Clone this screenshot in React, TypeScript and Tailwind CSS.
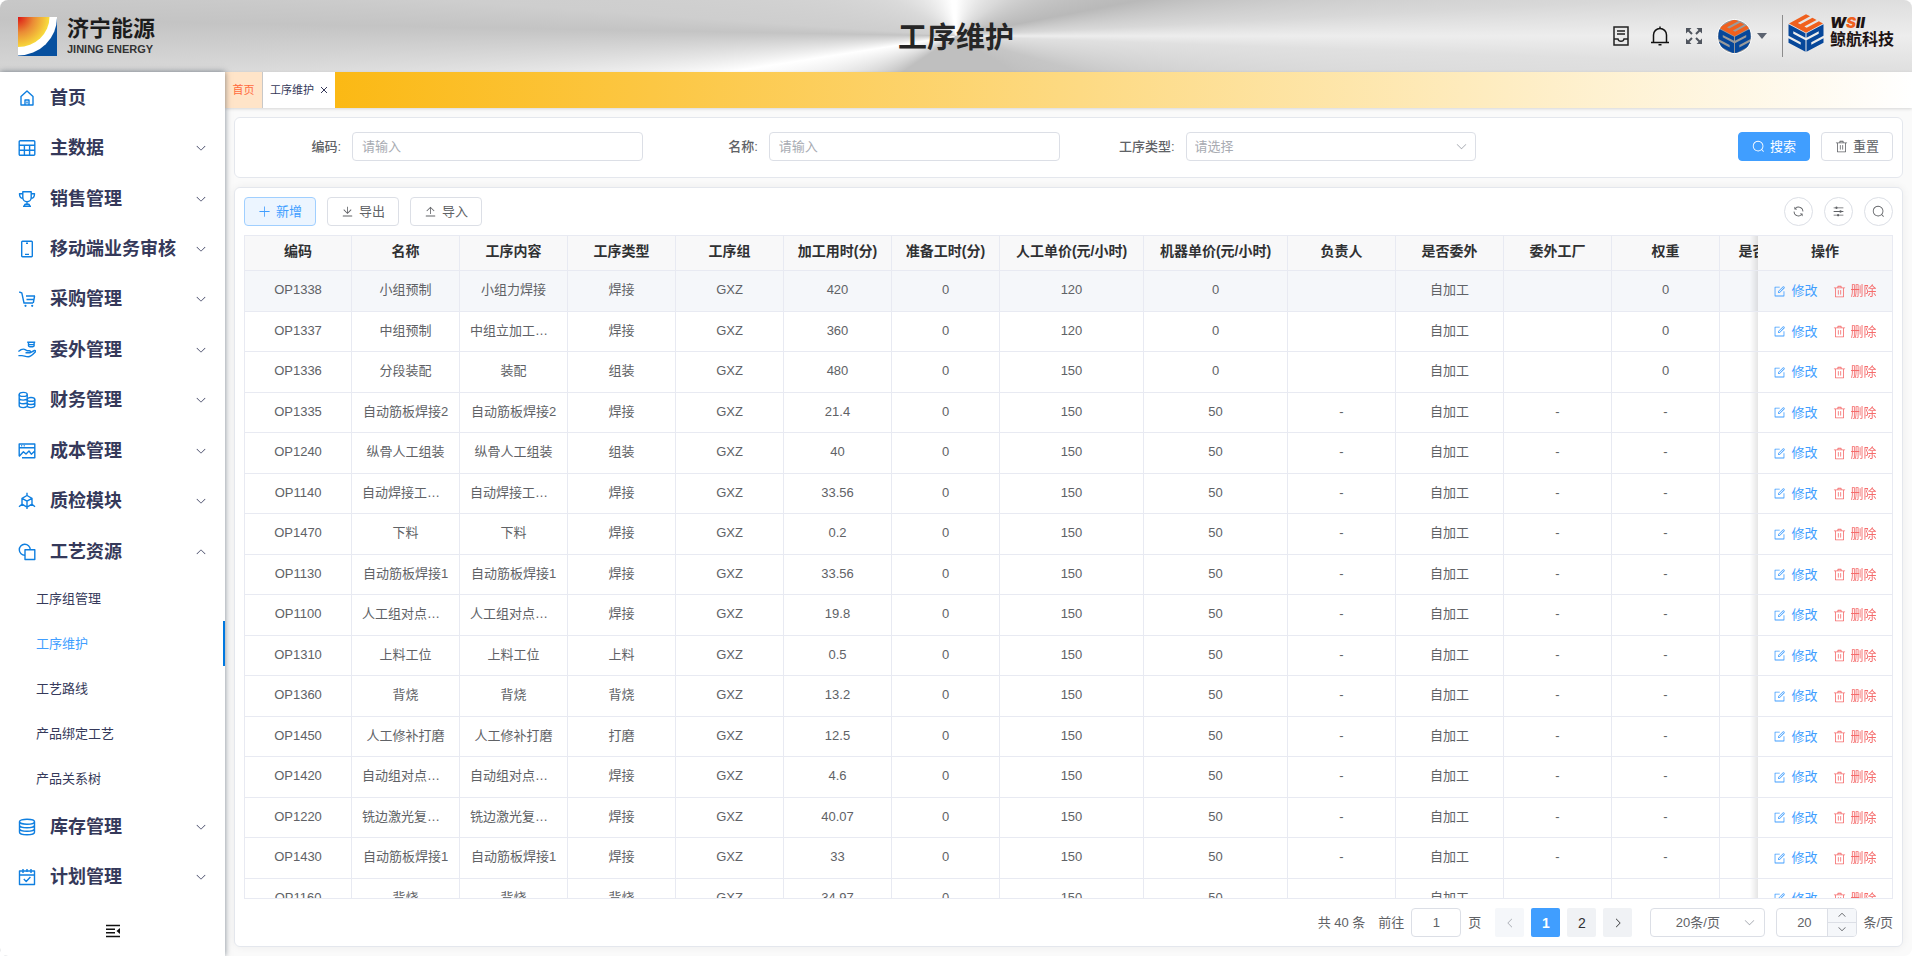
import { Fragment, useState } from 'react'
import type { ReactNode } from 'react'
import clsx from 'clsx'

const glyphs = {
  search:
    'm795.904 750.72 124.992 124.928a32 32 0 0 1-45.248 45.248L750.656 795.904a416 416 0 1 1 45.248-45.248zM480 832a352 352 0 1 0 0-704 352 352 0 0 0 0 704',
  trash:
    'M160 256H96a32 32 0 0 1 0-64h256V95.936a32 32 0 0 1 32-32h256a32 32 0 0 1 32 32V192h256a32 32 0 1 1 0 64h-64v672a32 32 0 0 1-32 32H192a32 32 0 0 1-32-32zm448-64v-64H416v64zM224 896h576V256H224zm192-128a32 32 0 0 1-32-32V416a32 32 0 0 1 64 0v320a32 32 0 0 1-32 32m192 0a32 32 0 0 1-32-32V416a32 32 0 0 1 64 0v320a32 32 0 0 1-32 32',
  edit:
    'M832 512a32 32 0 1 1 64 0v352a32 32 0 0 1-32 32H160a32 32 0 0 1-32-32V160a32 32 0 0 1 32-32h352a32 32 0 0 1 0 64H192v640h640zM469.952 554.24l52.8-7.552L847.104 222.4a32 32 0 1 0-45.248-45.248L477.44 501.44l-7.552 52.8zm422.4-422.4a96 96 0 0 1 0 135.808l-331.84 331.84a32 32 0 0 1-18.112 9.088L436.8 623.68a32 32 0 0 1-36.224-36.224l15.104-105.6a32 32 0 0 1 9.024-18.112l331.904-331.84a96 96 0 0 1 135.744 0z',
  plus:
    'M480 480V128a32 32 0 0 1 64 0v352h352a32 32 0 1 1 0 64H544v352a32 32 0 1 1-64 0V544H128a32 32 0 0 1 0-64z',
  download:
    'M160 832h704a32 32 0 1 1 0 64H160a32 32 0 1 1 0-64m384-253.696 236.288-236.352 45.248 45.248L508.8 704 192 387.2l45.248-45.248L480 584.704V128h64z',
  upload:
    'M160 832h704a32 32 0 1 1 0 64H160a32 32 0 1 1 0-64m384-578.304V704h-64V247.296L237.248 490.048 192 444.8 508.8 128l316.8 316.8-45.312 45.248z',
  down:
    'M831.872 340.864 512 652.672 192.128 340.864a30.592 30.592 0 0 0-42.752 0 29.12 29.12 0 0 0 0 41.6L489.664 714.24a32 32 0 0 0 44.672 0l340.288-331.712a29.12 29.12 0 0 0 0-41.728 30.592 30.592 0 0 0-42.752 0z',
  refresh:
    'M771.776 794.88A384 384 0 0 1 128 512h64a320 320 0 0 0 555.712 216.448H654.72a32 32 0 1 1 0-64h149.056a32 32 0 0 1 32 32v148.928a32 32 0 1 1-64 0v-50.56zM276.288 295.616h92.992a32 32 0 0 1 0 64H220.16a32 32 0 0 1-32-32V178.56a32 32 0 0 1 64 0v50.56A384 384 0 0 1 896.128 512h-64a320 320 0 0 0-555.776-216.384z',
  operation:
    'M389.44 768a96.064 96.064 0 0 1 181.12 0H896v64H570.56a96.064 96.064 0 0 1-181.12 0H128v-64zm192-288a96.064 96.064 0 0 1 181.12 0H896v64H762.56a96.064 96.064 0 0 1-181.12 0H128v-64zm-320-288a96.064 96.064 0 0 1 181.12 0H896v64H442.56a96.064 96.064 0 0 1-181.12 0H128v-64z',
}

function Glyph({ name, className = 'size-[13px]' }: { name: keyof typeof glyphs; className?: string }) {
  return (
    <svg viewBox="0 0 1024 1024" fill="currentColor" className={clsx('shrink-0', className)} aria-hidden="true">
      <path d={glyphs[name]} />
    </svg>
  )
}

function MenuIcon({ children }: { children: ReactNode }) {
  return (
    <svg
      viewBox="0 0 18 18"
      fill="none"
      stroke="currentColor"
      strokeWidth="1.4"
      strokeLinejoin="round"
      className="size-[18px] shrink-0 text-[#0f7fe0]"
      aria-hidden="true"
    >
      {children}
    </svg>
  )
}

interface MenuItem {
  label: string
  icon: ReactNode
  leaf?: boolean
  children?: string[]
}

const menu: MenuItem[] = [
  { label: '首页', leaf: true, icon: <path d="M3 16V7.6L9 2l6 5.600V16zM7 16v-5h4v5M9 12.500v2" /> },
  {
    label: '主数据',
    icon: <path d="M2.200 1.700h13.600a1 1 0 0 1 1 1v12.600a1 1 0 0 1-1 1H2.200a1 1 0 0 1-1-1V2.700a1 1 0 0 1 1-1zM1.200 6.200h15.600M1.200 11.200h15.600M6.400 6.200v10M11.600 6.200v10" />,
  },
  {
    label: '销售管理',
    icon: <path d="M4.800 1.700h8.400v5.800a4.200 4.200 0 0 1-8.400 0zM4.800 3.700H1.500c0 3 1 4.600 3.600 4.600M13.200 3.700h3.300c0 3-1 4.600-3.600 4.600M9 11.700v2.600M6 16.200l1-1.900h4l1 1.900zM5 16.400h8" />,
  },
  {
    label: '移动端业务审核',
    icon: <path d="M4.500 1.200h9a.8.8 0 0 1 .8.8v14a.8.8 0 0 1-.8.8h-9a.8.8 0 0 1-.8-.8V2a.8.8 0 0 1 .8-.8zM7 14.400h4M8 3.200h2" />,
  },
  {
    label: '采购管理',
    icon: (
      <>
        <path d="M1.200 2l2.600.8L6 13h9M8 6h9M16.600 6l-1.300 7M8.500 9.500h7" />
        <circle cx="7.500" cy="15.800" r="1.100" fill="currentColor" stroke="none" />
        <circle cx="14.200" cy="15.800" r="1.100" fill="currentColor" stroke="none" />
      </>
    ),
  },
  {
    label: '委外管理',
    icon: <path d="M9.200 1.300h8M10.500 1.500v3.200c0 1.400 5.600 1.400 5.600 0V1.500M10.500 3.600h5.600M.4 10.500l2.700-1.800c2-1 3.400-.6 4.500.2l1.400.8h2.500c1.300 0 1.300 2 0 2H7.500M11.800 11.800l4.600-2.300c1.300-.4 1.600.8.8 1.500-2.600 2.800-4.600 4.800-7 4.800-2.600 0-4.400-1.200-6.200-1.200H.4" />,
  },
  {
    label: '财务管理',
    icon: (
      <>
        <ellipse cx="5.200" cy="3.400" rx="4" ry="2" />
        <ellipse cx="13" cy="8.400" rx="3.800" ry="1.900" />
        <path d="M1.200 3.400v11.200c0 1 1.800 2 4 2 1.500 0 3-.4 3.600-1M9.200 3.400v4M1.200 7.100c0 1 1.800 2 4 2s3.200-.5 3.800-.9M1.200 10.800c0 1 1.800 2 4 2 1.800 0 3-.4 4-.9M9.200 8.400v6.200c0 1 1.700 2 3.800 2s3.800-1 3.800-2V8.400M9.200 11.500c0 1 1.700 2 3.800 2s3.800-1 3.800-2" />
      </>
    ),
  },
  {
    label: '成本管理',
    icon: <path d="M1.200 14V2h15.600v13.800H4M1.200 5.700h15.600M3.200 3.800h1M5.700 3.800h1M1 14.500l4.400-4.800L8 12l3-3 2.300 3.200 3.500-3.200" />,
  },
  {
    label: '质检模块',
    icon: <path d="M9 3.500l5 2.800v5.900l-5 2.900-5-2.900V6.300zM4 6.300l5 2.900 5-2.900M9 9.200v5.900M9 3.500V.8M4 12.200l-3 2.600M14 12.200l3 2.600M9 15.100v2" />,
  },
  {
    label: '工艺资源',
    icon: (
      <>
        <path d="M7 12.200A5.500 5.500 0 1 1 12.300 6.500" />
        <path d="M7 6.700h9.800v9.800H7z" />
      </>
    ),
    children: ['工序组管理', '工序维护', '工艺路线', '产品绑定工艺', '产品关系树'],
  },
  {
    label: '库存管理',
    icon: (
      <>
        <ellipse cx="9" cy="3.700" rx="7.500" ry="2.500" />
        <path d="M1.500 3.700v10.600c0 1.300 3.300 2.500 7.500 2.500s7.500-1.200 7.500-2.500V3.700M1.500 7.300c0 1.300 3.300 2.500 7.500 2.500s7.500-1.200 7.500-2.500M1.500 10.800c0 1.300 3.300 2.500 7.500 2.500s7.500-1.200 7.500-2.500" />
      </>
    ),
  },
  {
    label: '计划管理',
    icon: <path d="M1.500 3h15v13.500h-15zM1.500 7h15M5 1v4M9 1v3M13 1v4M5.800 11l2.400 2.400 4.200-4.400" />,
  },
]

const columns = [
  { title: '编码', width: 107 },
  { title: '名称', width: 108 },
  { title: '工序内容', width: 108 },
  { title: '工序类型', width: 108 },
  { title: '工序组', width: 108 },
  { title: '加工用时(分)', width: 108 },
  { title: '准备工时(分)', width: 108 },
  { title: '人工单价(元/小时)', width: 144 },
  { title: '机器单价(元/小时)', width: 144 },
  { title: '负责人', width: 108 },
  { title: '是否委外', width: 108 },
  { title: '委外工厂', width: 108 },
  { title: '权重', width: 108 },
  { title: '是否质检点', width: 108 },
]

// 编码, 名称, 工序内容, 工序类型, 加工用时, 人工单价, 机器单价, 负责人/委外工厂, 权重
const processes = [
  ['OP1338', '小组预制', '小组力焊接', '焊接', '420', '120', '0', '', '0'],
  ['OP1337', '中组预制', '中组立加工焊接', '焊接', '360', '120', '0', '', '0'],
  ['OP1336', '分段装配', '装配', '组装', '480', '150', '0', '', '0'],
  ['OP1335', '自动筋板焊接2', '自动筋板焊接2', '焊接', '21.4', '150', '50', '-', '-'],
  ['OP1240', '纵骨人工组装', '纵骨人工组装', '组装', '40', '150', '50', '-', '-'],
  ['OP1140', '自动焊接工位一', '自动焊接工位一', '焊接', '33.56', '150', '50', '-', '-'],
  ['OP1470', '下料', '下料', '焊接', '0.2', '150', '50', '-', '-'],
  ['OP1130', '自动筋板焊接1', '自动筋板焊接1', '焊接', '33.56', '150', '50', '-', '-'],
  ['OP1100', '人工组对点焊一', '人工组对点焊一', '焊接', '19.8', '150', '50', '-', '-'],
  ['OP1310', '上料工位', '上料工位', '上料', '0.5', '150', '50', '-', '-'],
  ['OP1360', '背烧', '背烧', '背烧', '13.2', '150', '50', '-', '-'],
  ['OP1450', '人工修补打磨', '人工修补打磨', '打磨', '12.5', '150', '50', '-', '-'],
  ['OP1420', '自动组对点焊一', '自动组对点焊一', '焊接', '4.6', '150', '50', '-', '-'],
  ['OP1220', '铣边激光复合焊', '铣边激光复合焊', '焊接', '40.07', '150', '50', '-', '-'],
  ['OP1430', '自动筋板焊接1', '自动筋板焊接1', '焊接', '33', '150', '50', '-', '-'],
  ['OP1160', '背烧', '背烧', '背烧', '34.97', '150', '50', '-', '-'],
]

function toCells([code, name, content, type, minutes, labor, machine, owner, weight]: string[]) {
  return [code, name, content, type, 'GXZ', minutes, '0', labor, machine, owner, '自加工', owner, weight, '']
}

function CubeMark({ className }: { className?: string }) {
  return (
    <svg viewBox="0 0 36 38" className={className} aria-hidden="true">
      <path d="M0 0H5V1.200H1.400V1.900H5V3.100H1.400V3.800H5V5H0Z" fill="#f0601e" transform="matrix(3.400 -1.850 3.400 1.850 1 9.400)" />
      <path d="M0 0H5V1.200H1.400V1.900H5V5H0V3.800H3.600V3.100H0Z" fill="#06479a" transform="matrix(3.400 1.800 0 3.700 .5 10.300)" />
      <path d="M0 0H5V3.100H1.400V3.800H5V5H0V1.900H3.600V1.200H0Z" fill="#06479a" transform="matrix(3.400 -1.800 0 3.700 18.500 19.300)" />
    </svg>
  )
}

function Header() {
  return (
    <header className="grid h-[72px] shrink-0 grid-cols-3 items-center bg-[conic-gradient(#fff_0deg,#d9d9d9_50deg,#b9b9b9_79deg,#d8d8d8_87deg,#ededed_90deg,#e0e0e0_92deg,#c6c6c6_106deg,#bfbfbf_122deg,#bfbfbf_236deg,#fff_261deg,#c4c4c4_271deg,#cecece_274deg,#dadada_300deg,#fff_353deg)] px-[18px]">
      <div className="flex items-center gap-[10px]">
        <svg viewBox="0 0 39 39" className="size-[39px]" role="img" aria-label="济宁能源">
          <defs>
            <radialGradient id="sun" gradientUnits="userSpaceOnUse" cx="0" cy="0" r="31">
              <stop offset="0" stopColor="#dc1414" />
              <stop offset=".5" stopColor="#ea8a35" />
              <stop offset="1" stopColor="#f8dc3c" />
            </radialGradient>
          </defs>
          <path d="M0 0H39V39H0z" fill="#07509f" />
          <path d="M0 0H39A39 38 0 0 1 0 38.500z" fill="#fff" />
          <path d="M0 0H31.500A31.500 30 0 0 1 0 30z" fill="url(#sun)" />
        </svg>
        <div className="flex flex-col text-[#1c1c1c]">
          <span className="text-[22px] leading-[26px] font-bold">济宁能源</span>
          <span className="text-[11px] leading-[14px] font-bold text-[#333]">JINING ENERGY</span>
        </div>
      </div>
      <h1 className="pt-1 text-center text-[29px] leading-9 font-bold text-[#262626]">工序维护</h1>
      <div className="flex items-center justify-end">
        <button type="button" aria-label="单据">
          <svg viewBox="0 0 20 22" fill="none" stroke="#222" strokeWidth="1.500" className="h-[22px] w-5">
            <path d="M3 2h14v18H3zM6 6h8M6 9h8M3 14h4c.5 3 5.500 3 6 0h4" />
          </svg>
        </button>
        <button type="button" aria-label="消息" className="ml-[18px]">
          <svg viewBox="0 0 22 22" fill="none" stroke="#111" strokeWidth="1.500" className="size-[22px]">
            <path d="M2 17.500h18M4.500 17.500V10a6.500 6.500 0 0 1 13 0v7.500M11 3.500V1.500M9.500 19.700h3" />
          </svg>
        </button>
        <button type="button" aria-label="全屏" className="ml-[14px]">
          <svg viewBox="0 0 18 18" className="size-[18px]" fill="#50555e" stroke="#50555e" strokeWidth="2">
            <path d="M1 1h5.500L1 6.500zM17 1v5.500L11.500 1zM1 17v-5.500L6.500 17zM17 17h-5.500l5.500-5.500z" stroke="none" />
            <path d="M3 3l4 4M15 3l-4 4M3 15l4-4M15 15l-4-4" />
          </svg>
        </button>
        <button type="button" aria-label="账户" className="ml-[14px] flex items-center gap-[5px]">
          <span className="flex size-[35px] items-center justify-center overflow-hidden rounded-full border border-white bg-[#9a9a9a]">
            <CubeMark className="size-[35px] shrink-0" />
          </span>
          <svg viewBox="0 0 10 6" className="h-[6px] w-[10px]" fill="#5c6370" aria-hidden="true">
            <path d="M0 0h10L5 6z" />
          </svg>
        </button>
        <div className="ml-[15px] h-[42px] w-px bg-[#8c8c8c]" />
        <div className="ml-[5px] flex items-center gap-[6px]">
          <CubeMark className="mb-[6px] h-[38px] w-9" />
          <div className="mb-[6px] flex flex-col whitespace-nowrap text-[#1d1414]">
            <span className="font-['Inter','Liberation_Sans',sans-serif] text-[15px] leading-[14px] font-black italic">
              W<span className="text-[#f0601e]">S</span>II
            </span>
            <span className="text-[16px] leading-5 font-bold">鲸航科技</span>
          </div>
        </div>
      </div>
    </header>
  )
}

function Sidebar() {
  const [active, setActive] = useState('工序维护')

  return (
    <aside className="z-10 flex w-[225px] shrink-0 flex-col bg-white shadow-[0_0_6px_rgba(0,21,41,0.5)]">
      <nav className="flex min-h-0 flex-1 flex-col overflow-hidden text-[#35395a]">
        {menu.map((item) => (
          <Fragment key={item.label}>
            <button type="button" className="flex min-h-0 flex-1 items-center pt-px pr-[18px] pl-[18px] text-left">
              <MenuIcon>{item.icon}</MenuIcon>
              <span className="ml-[14px] flex-1 text-lg leading-6 font-bold">{item.label}</span>
              {!item.leaf && <Glyph name="down" className={clsx('size-3', item.children && 'rotate-180')} />}
            </button>
            {item.children?.map((child) => (
              <a
                key={child}
                href="#"
                onClick={() => setActive(child)}
                className={clsx(
                  'flex h-[45px] shrink-0 items-center border-r-2 pl-9 text-[13px]',
                  child === active ? 'border-[#0078e0] text-[#409eff]' : 'border-transparent'
                )}
              >
                {child}
              </a>
            ))}
          </Fragment>
        ))}
      </nav>
      <button type="button" aria-label="收起菜单" className="flex h-[54px] shrink-0 items-center justify-center pt-1">
        <svg viewBox="0 0 16 14" className="h-[14px] w-4" fill="none" stroke="#111" strokeWidth="1.500">
          <path d="M1 1.500h14M1 5.200h9M1 8.800h9M1 12.500h14" />
          <path d="M15 4v6l-3.500-3z" fill="#111" stroke="none" />
        </svg>
      </button>
    </aside>
  )
}

function TabBar() {
  return (
    <div className="flex h-9 shrink-0 bg-[linear-gradient(to_right,#fbb404,#fff)] text-[11px] shadow-[0_1px_3px_rgba(0,0,0,0.15)]">
      <a href="#" className="flex w-[38px] items-center justify-center border-r border-[#c8c8c8] bg-[#ffe4c8] text-[#ff6b3d]">
        首页
      </a>
      <div className="flex items-center gap-[6px] bg-white px-[7px] text-[#35395a]">
        <span>工序维护</span>
        <button type="button" aria-label="关闭">
          <svg viewBox="0 0 8 8" className="size-2" stroke="currentColor" strokeWidth="1">
            <path d="M1 1l6 6M7 1L1 7" />
          </svg>
        </button>
      </div>
    </div>
  )
}

const buttonBase = 'inline-flex h-[29px] w-[72px] shrink-0 items-center justify-center gap-[5px] rounded-[4px] border text-[13px]'
const buttonPlain = 'border-[#dcdfe6] bg-white text-[#606266]'
const fieldBase = 'h-[29px] rounded-[4px] border border-[#dcdfe6] bg-white text-[13px] text-[#606266] outline-none'

function SearchForm() {
  return (
    <form className="grid shrink-0 grid-cols-4 rounded-md border border-[#e4e7ed] bg-white pt-[14px] pb-4 text-[13px]">
      <div className="flex items-center pr-[9px]">
        <label htmlFor="code" className="w-[117px] pr-[11px] text-right font-medium text-[#606266]">编码:</label>
        <input id="code" placeholder="请输入" className={clsx(fieldBase, 'min-w-0 flex-1 px-[9px] placeholder:text-[#a8abb2]')} />
      </div>
      <div className="flex items-center pr-[9px]">
        <label htmlFor="name" className="w-[117px] pr-[11px] text-right font-medium text-[#606266]">名称:</label>
        <input id="name" placeholder="请输入" className={clsx(fieldBase, 'min-w-0 flex-1 px-[9px] placeholder:text-[#a8abb2]')} />
      </div>
      <div className="flex items-center pr-[9px]">
        <label htmlFor="type" className="w-[117px] pr-[11px] text-right font-medium text-[#606266]">工序类型:</label>
        <div className="relative min-w-0 flex-1">
          <select id="type" className={clsx(fieldBase, 'w-full appearance-none px-2 !text-[#a8abb2]')}>
            <option>请选择</option>
            <option>焊接</option>
            <option>组装</option>
          </select>
          <Glyph name="down" className="pointer-events-none absolute top-2 right-2 size-[13px] text-[#a8abb2]" />
        </div>
      </div>
      <div className="flex items-center justify-end gap-[11px] pr-[9px]">
        <button type="button" className={clsx(buttonBase, 'border-[#409eff] bg-[#409eff] text-white')}>
          <Glyph name="search" />
          搜索
        </button>
        <button type="reset" className={clsx(buttonBase, buttonPlain)}>
          <Glyph name="trash" />
          重置
        </button>
      </div>
    </form>
  )
}

function Toolbar() {
  return (
    <div className="flex shrink-0 items-center gap-[11px]">
      <button type="button" className={clsx(buttonBase, 'border-[#a0cfff] bg-[#ecf5ff] text-[#409eff]')}>
        <Glyph name="plus" />
        新增
      </button>
      <button type="button" className={clsx(buttonBase, buttonPlain)}>
        <Glyph name="download" />
        导出
      </button>
      <button type="button" className={clsx(buttonBase, buttonPlain)}>
        <Glyph name="upload" />
        导入
      </button>
      <div className="ml-auto flex gap-[11px] text-[#606266]">
        {(['refresh', 'operation', 'search'] as const).map((name) => (
          <button
            key={name}
            type="button"
            aria-label={name}
            className="flex size-[29px] items-center justify-center rounded-full border border-[#dcdfe6] bg-white"
          >
            <Glyph name={name} />
          </button>
        ))}
      </div>
    </div>
  )
}

function ProcessTable() {
  // 固定列只在左侧有阴影
  const fixed =
    'sticky right-0 before:absolute before:inset-y-0 before:right-full before:w-2 before:bg-linear-to-l before:from-black/10 before:to-transparent'

  return (
    <div className="min-h-0 flex-1 overflow-hidden border-t border-b border-l border-[#e8eaf2]">
      <table className="w-[1718px] min-w-full table-fixed border-separate border-spacing-0 text-center text-[13px] text-[#606266]">
        <colgroup>
          {columns.map((col) => (
            <col key={col.title} style={{ width: col.width }} />
          ))}
          <col className="w-[135px]" />
        </colgroup>
        <thead>
          <tr className="h-[35px] text-sm text-[#303133]">
            {columns.map((col) => (
              <th key={col.title} className="overflow-hidden border-r border-b border-[#e8eaf2] bg-[#f8f8f9] pb-1 font-bold whitespace-nowrap">
                {col.title}
              </th>
            ))}
            <th className={clsx(fixed, 'border-r border-b border-[#e8eaf2] bg-[#f8f8f9] pb-1 font-bold')}>操作</th>
          </tr>
        </thead>
        <tbody>
          {processes.map((row, i) => {
            const cell = clsx('border-r border-b border-[#e8eaf2]', i === 0 ? 'bg-[#f5f7fa]' : 'bg-white')
            return (
              <tr key={row[0]} className="odd:h-[41px] even:h-10">
                {toCells(row).map((value, c) => (
                  <td key={c} className={clsx(cell, 'truncate px-[10px] pb-[2px]')}>
                    {value}
                  </td>
                ))}
                <td className={clsx(cell, fixed)}>
                  <div className="flex items-center justify-center gap-[15px]">
                    <button type="button" className="flex items-center gap-[5px] text-[#409eff]">
                      <Glyph name="edit" />
                      修改
                    </button>
                    <button type="button" className="flex items-center gap-[5px] text-[#f56c6c]">
                      <Glyph name="trash" />
                      删除
                    </button>
                  </div>
                </td>
              </tr>
            )
          })}
        </tbody>
      </table>
    </div>
  )
}

function Pagination() {
  const [page, setPage] = useState(1)
  const [size, setSize] = useState(20)
  const pageButton = 'flex size-[29px] items-center justify-center rounded-[2px] text-sm'

  return (
    <div className="flex shrink-0 items-center justify-end text-[13px] text-[#606266]">
      <span>共 40 条</span>
      <label htmlFor="jumper" className="ml-[13px]">前往</label>
      <input id="jumper" defaultValue="1" className={clsx(fieldBase, 'mx-[7px] w-[50px] text-center')} />
      <span>页</span>
      <div className="ml-[14px] flex gap-[7px]">
        <button
          type="button"
          aria-label="上一页"
          disabled={page === 1}
          onClick={() => setPage(1)}
          className={clsx(pageButton, 'bg-[#f5f7fa] text-[#a8abb2]')}
        >
          <Glyph name="down" className="size-3 rotate-90" />
        </button>
        {[1, 2].map((n) => (
          <button
            key={n}
            type="button"
            onClick={() => setPage(n)}
            className={clsx(pageButton, n === page ? 'bg-[#409eff] font-bold text-white' : 'bg-[#f0f2f5] text-[#303133]')}
          >
            {n}
          </button>
        ))}
        <button type="button" aria-label="下一页" onClick={() => setPage(2)} className={clsx(pageButton, 'bg-[#f0f2f5] text-[#303133]')}>
          <Glyph name="down" className="size-3 -rotate-90" />
        </button>
      </div>
      <div className="relative ml-[18px]">
        <select aria-label="每页条数" className={clsx(fieldBase, 'w-[115px] appearance-none pr-5 text-center')}>
          <option>20条/页</option>
          <option>40条/页</option>
        </select>
        <Glyph name="down" className="pointer-events-none absolute top-2 right-[9px] size-[13px] text-[#a8abb2]" />
      </div>
      <div className="ml-[11px] flex h-[29px] w-[81px] overflow-hidden rounded-[4px] border border-[#dcdfe6]">
        <input
          id="size"
          value={size}
          onChange={(e) => setSize(Number(e.target.value) || 0)}
          className="w-[50px] pl-1 text-center text-[13px] outline-none"
        />
        <div className="grid flex-1 grid-rows-2 border-l border-[#dcdfe6] bg-[#f5f7fa]">
          <button type="button" aria-label="增加" onClick={() => setSize(size + 1)} className="flex items-center justify-center border-b border-[#dcdfe6]">
            <Glyph name="down" className="size-[10px] rotate-180" />
          </button>
          <button type="button" aria-label="减少" onClick={() => setSize(size - 1)} className="flex items-center justify-center">
            <Glyph name="down" className="size-[10px]" />
          </button>
        </div>
      </div>
      <label htmlFor="size" className="ml-[6px]">条/页</label>
    </div>
  )
}

export default function App() {
  return (
    <div className="flex h-screen flex-col overflow-hidden rounded-lg bg-[#fafafa] font-['Liberation_Sans','Noto_Sans_CJK_SC',sans-serif]">
      <Header />
      <div className="flex min-h-0 flex-1">
        <Sidebar />
        <div className="flex min-w-0 flex-1 flex-col">
          <TabBar />
          <main className="flex min-h-0 flex-1 flex-col gap-[9px] p-[9px]">
            <SearchForm />
            <section className="flex min-h-0 flex-1 flex-col gap-[9px] rounded-md border border-[#e4e7ed] bg-white p-[9px] shadow-[0_0_9px_rgba(0,0,0,0.06)]">
              <Toolbar />
              <ProcessTable />
              <Pagination />
            </section>
          </main>
        </div>
      </div>
    </div>
  )
}
